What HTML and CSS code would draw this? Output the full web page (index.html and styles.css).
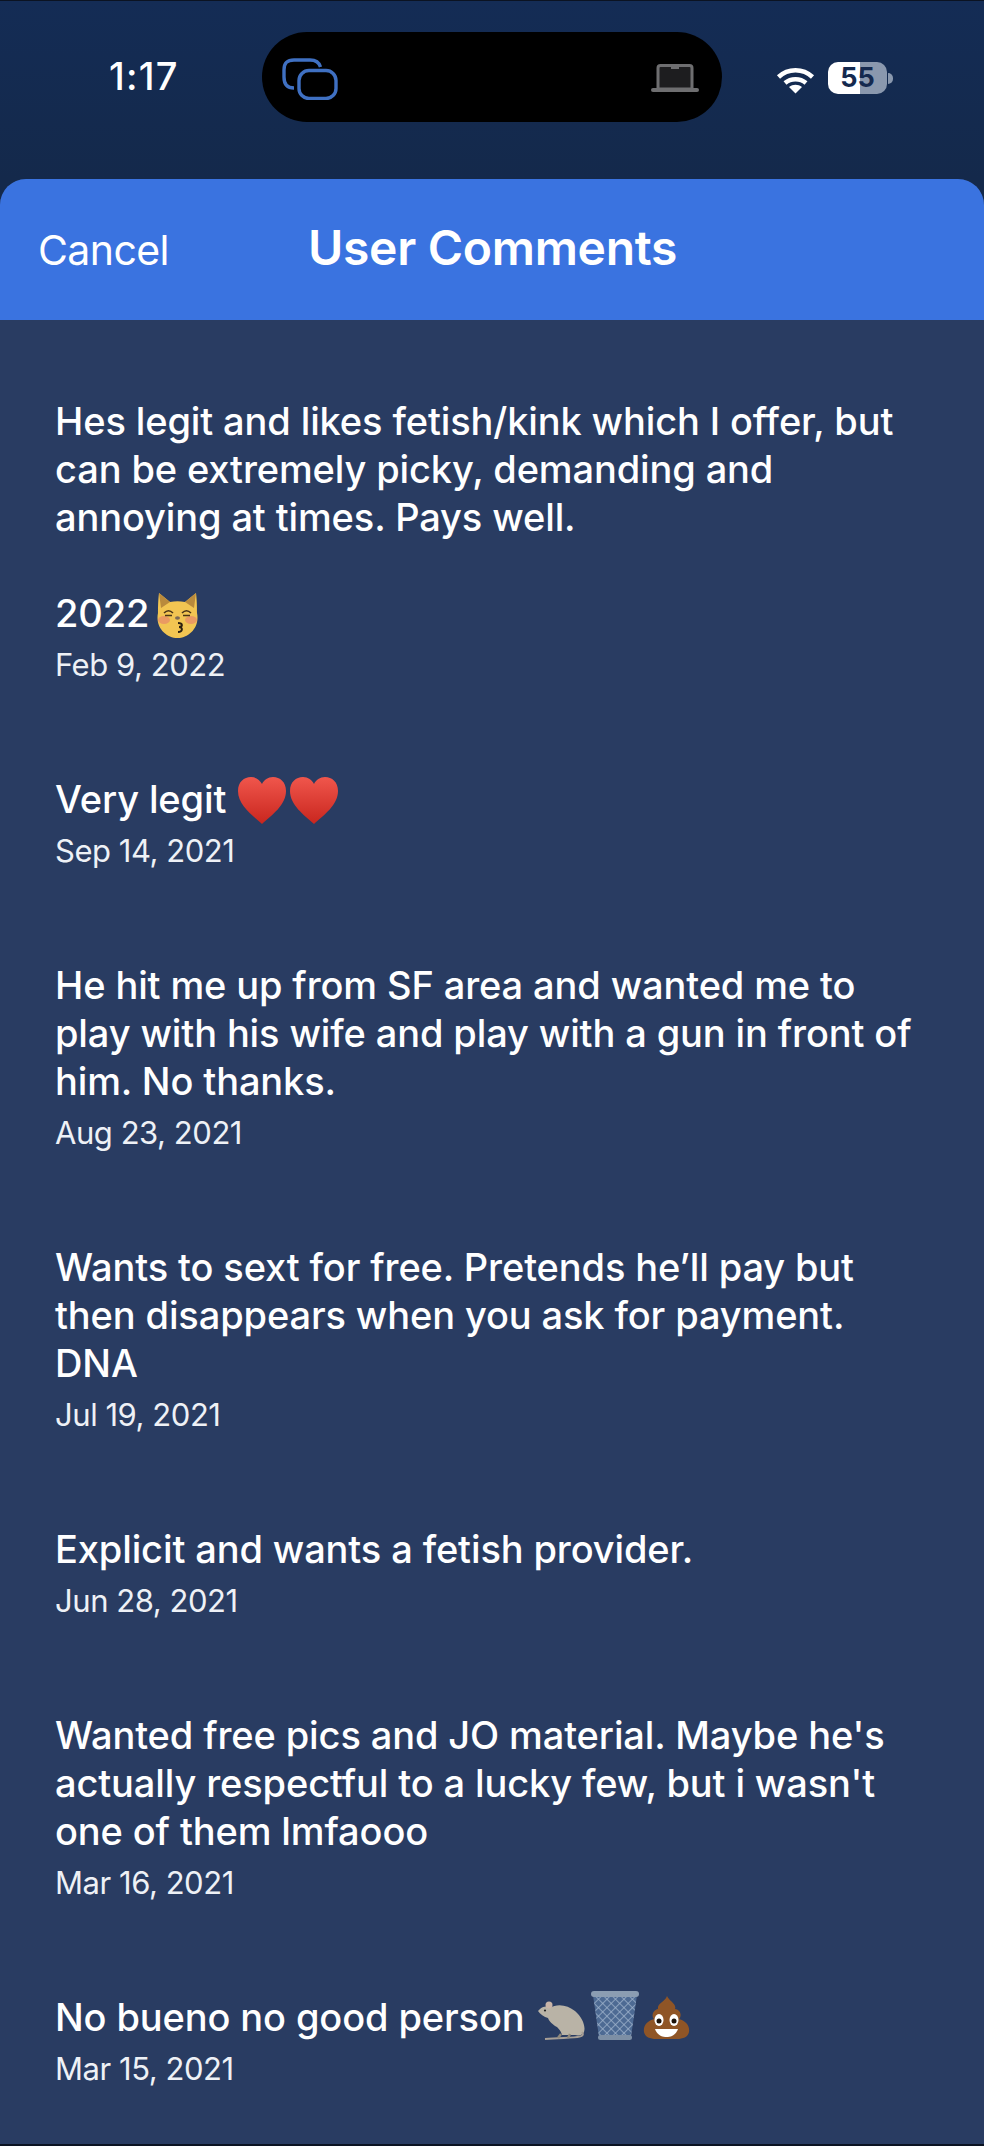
FILE: index.html
```html
<!DOCTYPE html>
<html lang="en">
<head>
    <meta charset="UTF-8">
    <meta name="viewport" content="width=device-width, initial-scale=1.0">
    <title>User Comments</title>
    <link rel="stylesheet" href="styles.css">
</head>
<body>
    <div class="phone">
        <!-- Status bar with the dynamic island -->
        <div class="status-bar">
            <span class="time">1:17</span>
            <div class="island">
                <svg class="stack-icon" viewBox="0 0 56 42" fill="none" stroke="#3f70c2" stroke-width="3.4">
                    <path d="M12 30 C5 30 2 26 2 19 V12 C2 5 5 2 12 2 H28 C34 2 37 4 38.500 9"/>
                    <rect x="17" y="12.500" width="37" height="28" rx="10"/>
                </svg>
                <svg class="laptop-icon" viewBox="0 0 48 28">
                    <path d="M7 25 V4 C7 2.500 8 1.500 9.500 1.500 H38.500 C40 1.500 41 2.500 41 4 V25 Z" fill="#1d1d1f" stroke="#6e6e70" stroke-width="3"/>
                    <rect x="20" y="2" width="8" height="3" fill="#6e6e70"/>
                    <rect x="0" y="24" width="48" height="4" rx="2" fill="#6e6e70"/>
                </svg>
            </div>
            <svg class="wifi-icon" viewBox="0 0 39 27" fill="none" stroke="#fff" stroke-width="4.500">
                <path d="M2.500 10 C12 1 27 1 36.500 10"/>
                <path d="M9 16 C15 11 24 11 30 16"/>
                <path d="M19.500 26.500 L13 20 C17 17 22 17 26 20 Z" fill="#fff" stroke="none"/>
            </svg>
            <div class="battery">55</div>
            <span class="battery-nub"></span>
        </div>

        <div class="sheet">
            <div class="sheet-header">
                <span class="cancel">Cancel</span>
                <h1 class="title">User Comments</h1>
            </div>

            <div class="comments">
                <div class="comment">
                    <p class="comment-text">Hes legit and likes fetish/kink which I offer, but can be extremely picky, demanding and annoying at times. Pays well.<br><br>2022<svg class="emoji emoji-cat" viewBox="0 0 43 47">
                        <path d="M3 2 L14 11 C19 10 24 10 29 11 L40 2 C41 10 41 18 41 22 C44 36 33 47 21.500 47 C10 47 -1 36 2 22 C2 18 2 10 3 2 Z" fill="#f2c552"/>
                        <path d="M3 2 L14 11 L5 17 Z M40 2 L29 11 L38 17 Z" fill="#b98a3c"/>
                        <ellipse cx="8" cy="29" rx="6" ry="4" fill="#ea9a62"/>
                        <ellipse cx="35" cy="29" rx="6" ry="4" fill="#ea9a62"/>
                        <path d="M8 22 C11 19 14 19 17 22 M26 22 C29 19 32 19 35 22 M9 24.500 H16 M27 24.500 H34" fill="none" stroke="#4a3518" stroke-width="1.600"/>
                        <ellipse cx="21.500" cy="27" rx="2.500" ry="1.800" fill="#7d6a55"/>
                        <path d="M22 32 C27 32 27 36 23 36 C27 36 27 41 22 41" fill="none" stroke="#2c2010" stroke-width="2"/>
                    </svg></p>
                    <div class="comment-date">Feb 9, 2022</div>
                </div>
                <div class="comment">
                    <p class="comment-text">Very legit <svg class="emoji emoji-heart" viewBox="0 0 48 47">
                        <defs>
                            <linearGradient id="heartFill" x1="0" y1="0" x2="0" y2="1">
                                <stop offset="0" stop-color="#f0564c"/>
                                <stop offset="1" stop-color="#c9261e"/>
                            </linearGradient>
                        </defs>
                        <path d="M24 47 C14 38 0 28 0 14 C0 5 6 0 13 0 C18 0 22 3 24 7 C26 3 30 0 35 0 C42 0 48 5 48 14 C48 28 34 38 24 47 Z" fill="url(#heartFill)"/>
                    </svg><svg class="emoji emoji-heart" viewBox="0 0 48 47">
                        <path d="M24 47 C14 38 0 28 0 14 C0 5 6 0 13 0 C18 0 22 3 24 7 C26 3 30 0 35 0 C42 0 48 5 48 14 C48 28 34 38 24 47 Z" fill="url(#heartFill)"/>
                    </svg></p>
                    <div class="comment-date">Sep 14, 2021</div>
                </div>
                <div class="comment">
                    <p class="comment-text">He hit me up from SF area and wanted me to play with his wife and play with a gun in front of him. No thanks.</p>
                    <div class="comment-date">Aug 23, 2021</div>
                </div>
                <div class="comment">
                    <p class="comment-text">Wants to sext for free. Pretends he’ll pay but then disappears when you ask for payment.<br>DNA</p>
                    <div class="comment-date">Jul 19, 2021</div>
                </div>
                <div class="comment">
                    <p class="comment-text">Explicit and wants a fetish provider.</p>
                    <div class="comment-date">Jun 28, 2021</div>
                </div>
                <div class="comment">
                    <p class="comment-text">Wanted free pics and JO material. Maybe he's actually respectful to a lucky few, but i wasn't one of them lmfaooo</p>
                    <div class="comment-date">Mar 16, 2021</div>
                </div>
                <div class="comment">
                    <p class="comment-text">No bueno no good person <svg class="emoji emoji-rat" viewBox="0 0 50 40">
                        <path d="M3 9 C7 6 10 6 13 8 C20 3 31 5 38 11 C45 17 49 26 47 32 C46 35 42 36 38 35 H25 C24 31 22 29 20 27 C16 25 12 21 11 18 C7 17 3 14 1 11 Z" fill="#b9b3a6"/>
                        <circle cx="12" cy="5" r="3.500" fill="#c9b5a8"/>
                        <circle cx="8" cy="10.500" r="1.100" fill="#222"/>
                        <path d="M45 32 C50 39 34 37 8 39" fill="none" stroke="#a79f96" stroke-width="1.800"/>
                        <path d="M24 34 L21 38 M33 34 L31 38" stroke="#8f887c" stroke-width="2.400"/>
                    </svg><svg class="emoji emoji-trash" viewBox="0 0 50 50">
                        <defs>
                            <pattern id="trashMesh" width="6" height="6" patternUnits="userSpaceOnUse" patternTransform="rotate(45)">
                                <rect width="6" height="6" fill="#4d6a93"/>
                                <path d="M0 0 H6 M0 0 V6" stroke="#9fb3cc" stroke-width="1.500"/>
                            </pattern>
                        </defs>
                        <path d="M3 5 H47 L41 47 H9 Z" fill="url(#trashMesh)"/>
                        <rect x="1" y="1" width="48" height="6" rx="3" fill="#8b9db2"/>
                        <rect x="8" y="45" width="34" height="5" rx="2.500" fill="#7d8fa5"/>
                    </svg><svg class="emoji emoji-poop" viewBox="0 0 47 43">
                        <path d="M24 0 C26 5 34 8 32 13 C38 14 39 20 36 23 C43 25 47 30 46 36 C45 41 40 43 34 43 H13 C7 43 2 41 1 36 C0 30 4 25 11 23 C8 20 10 14 15 13 C14 7 22 6 24 0 Z" fill="#8f5526"/>
                        <ellipse cx="16" cy="24" rx="4.500" ry="6" fill="#fff"/>
                        <ellipse cx="31" cy="24" rx="4.500" ry="6" fill="#fff"/>
                        <circle cx="16" cy="25" r="2.500" fill="#1e130a"/>
                        <circle cx="31" cy="25" r="2.500" fill="#1e130a"/>
                        <path d="M12 33 H35 C33 39 28 41 23.500 41 C19 41 14 39 12 33 Z" fill="#fff"/>
                    </svg></p>
                    <div class="comment-date">Mar 15, 2021</div>
                </div>
            </div>
        </div>
    </div>
</body>
</html>
```

FILE: styles.css
```css
html, body { margin: 0; padding: 0; }
body { background: #0b1322; font-family: Inter, "Liberation Sans", sans-serif; color: white; }
.phone { height: 2143px; margin-top: 1px; display: flex; flex-direction: column; background: linear-gradient(#142c55, #14294b 178px); overflow: hidden; }

/* Status bar */
.status-bar { height: 178px; flex-shrink: 0; display: flex; align-items: flex-start; box-sizing: border-box; padding-top: 31px; }
.time { width: 262px; box-sizing: border-box; padding-left: 109px; margin-top: 22px; font-size: 38px; line-height: 44px; font-weight: 500; letter-spacing: 1.2px; }
.island { width: 460px; height: 90px; box-sizing: border-box; padding: 26px 23px 0 20px; background: black; border-radius: 45px; display: flex; justify-content: space-between; align-items: flex-start; }
.stack-icon { width: 56px; height: 42px; }
.laptop-icon { width: 48px; height: 28px; margin-top: 6px; }
.wifi-icon { width: 39px; height: 27px; margin: 35px 0 0 54px; }
.battery { width: 59px; height: 32px; margin: 30px 0 0 13px; border-radius: 10px; background: linear-gradient(to right, white 54%, #8a98ae 54%); color: #14294f; font-size: 27px; line-height: 32px; font-weight: 700; text-align: center; }
.battery-nub { width: 5px; height: 11px; margin: 41px 0 0 1px; border-radius: 0 5px 5px 0; background: #8a98ae; }

/* Sheet */
.sheet { flex: 1; background: #293c62; border-radius: 26px 26px 0 0; overflow: hidden; }
.sheet-header { height: 141px; background: #3a73e0; display: flex; align-items: center; padding-bottom: 4px; box-sizing: border-box; }
.cancel { width: 308px; box-sizing: border-box; padding-left: 38px; padding-top: 4px; font-size: 41px; letter-spacing: -0.6px; }
.title { margin: 0; font-size: 48px; font-weight: 600; letter-spacing: -0.3px; }

.comments { padding: 77px 54px 0 55px; display: flex; flex-direction: column; gap: 90px; }
.comment-text { margin: 0; font-size: 38px; line-height: 48px; font-weight: 500; letter-spacing: -0.12px; }
.comment-date { margin-top: 8px; font-size: 31px; line-height: 40px; letter-spacing: -0.45px; color: #eef1f6; }

/* Emoji drawings sit in the text line without stretching it */
.emoji { display: inline-block; margin-top: -16px; margin-bottom: -16px; }
.emoji-cat { width: 43px; height: 47px; vertical-align: 5px; margin-left: 7px; }
.emoji-heart { width: 48px; height: 47px; vertical-align: 5px; margin-right: 4px; }
.emoji-heart:first-of-type { margin-left: 2px; }
.emoji-rat { width: 50px; height: 40px; vertical-align: 7px; margin-left: 2px; }
.emoji-trash { width: 50px; height: 50px; vertical-align: 7px; margin-left: 3px; }
.emoji-poop { width: 47px; height: 43px; vertical-align: 8px; margin-left: 3px; }
```
